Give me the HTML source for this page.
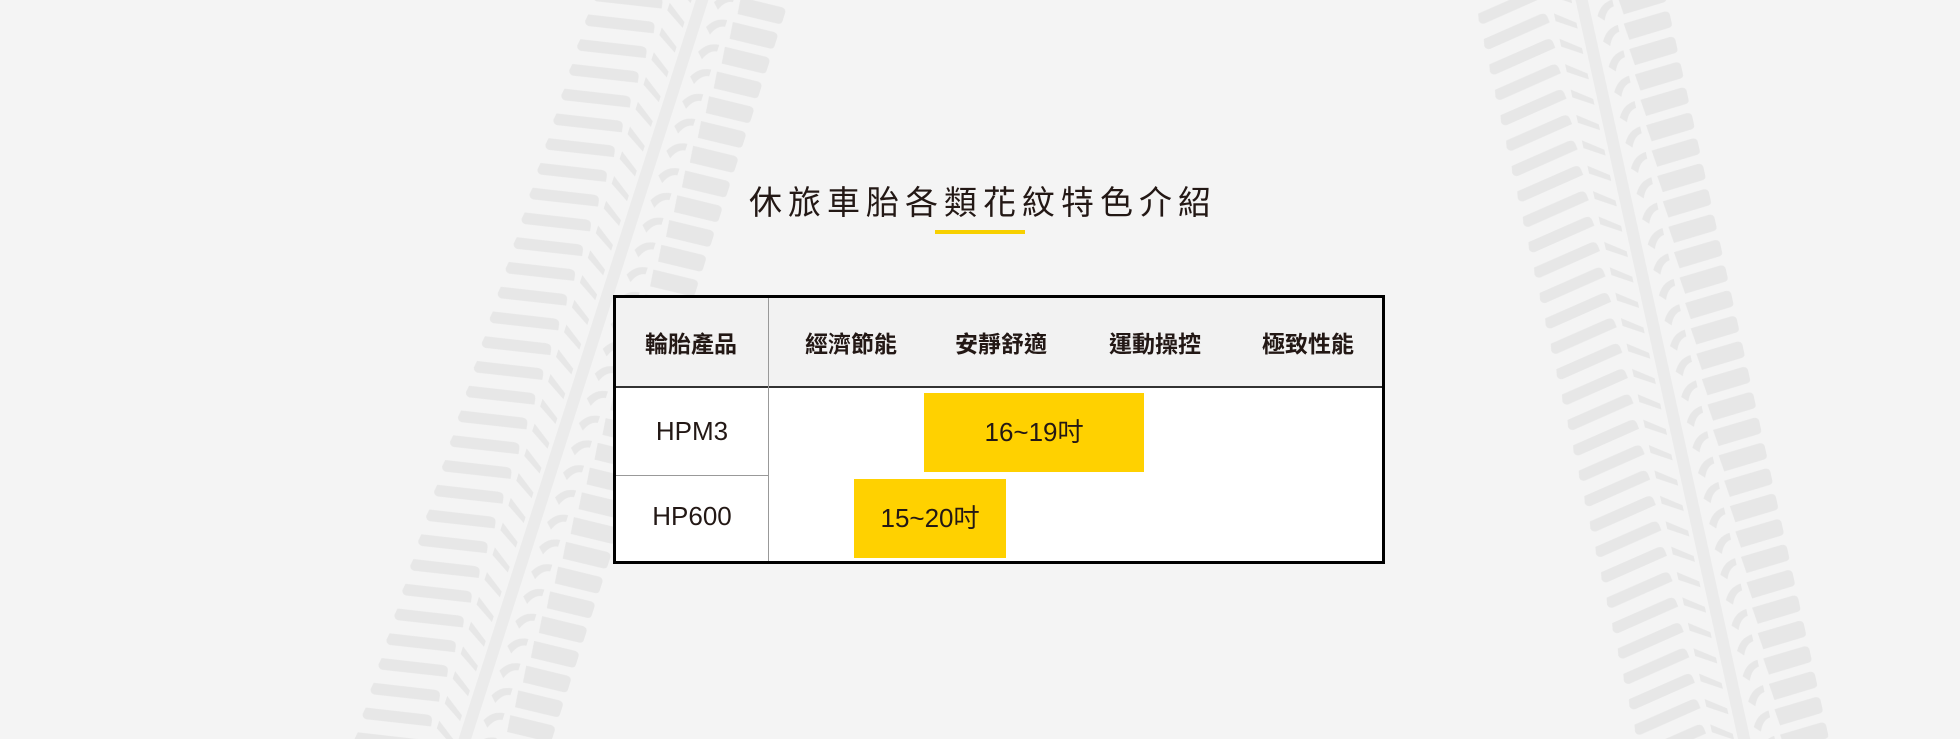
<!DOCTYPE html>
<html><head><meta charset="utf-8"><style>
html,body{margin:0;padding:0;overflow:hidden}
body{width:1960px;height:739px;background:#f4f4f4;position:relative;overflow:hidden;font-family:"Liberation Sans","Noto Sans CJK TC",sans-serif;color:#231815}
svg.bg{position:absolute;left:0;top:0}
.title{position:absolute;left:0;width:1960px;top:178px;text-align:center;font-size:33px;letter-spacing:6px;font-family:"Noto Sans CJK TC",sans-serif;font-weight:400;line-height:44px;padding-left:6px;box-sizing:border-box}
.line{position:absolute;left:935px;top:230px;width:90px;height:4px;background:#f7d000}
.tbl{position:absolute;left:613px;top:295px;width:772px;height:269px;border:3px solid #000;box-sizing:border-box;background:#fff;overflow:hidden}
.hd{position:absolute;left:0;top:0;width:766px;height:88px;background:#f2f2f2;border-bottom:2px solid #333}
.h{position:absolute;top:0;height:88px;line-height:88px;font-size:23px;font-weight:700;font-family:"Noto Sans CJK TC",sans-serif;text-align:center;width:150px}
.vl{position:absolute;left:152px;top:0;width:1px;height:263px;background:#999}
.hl{position:absolute;left:0;top:177px;width:152px;height:1px;background:#999}
.r{position:absolute;left:0;width:152px;text-align:center;font-size:26px;font-weight:400}
.y{position:absolute;background:#ffd100;text-align:center;font-size:26px;font-family:"Liberation Sans","Noto Sans CJK TC",sans-serif}
</style></head><body>
<svg class="bg" width="1960" height="739" viewBox="0 0 1960 739">
<defs>
<pattern id="tr" x="-95" y="0" width="190" height="26" patternUnits="userSpaceOnUse">
<path d="M2 14 L62 2 Q68 1 69 6 L70 12 L6 25 Q2 25 1 21Z" fill="#e7e7e7"/>
<path d="M76 4 L96 18 L96 24 L76 12Z" fill="#e7e7e7"/>
<path d="M100 0 L112 0 L112 26 L100 26Z" fill="#ebebeb"/>
<path d="M118 16 Q124 4 136 3 L136 10 Q128 11 124 22Z" fill="#e7e7e7"/>
<path d="M142 3 L184 0 Q189 0 189 5 L189 13 Q189 17 184 17 L144 20Z" fill="#e7e7e7"/>
</pattern>
</defs>
<g transform="translate(697,-20) rotate(17.8)"><rect x="-95" y="-60" width="190" height="900" fill="url(#tr)"/></g>
<g transform="translate(1566,-20) rotate(-12.4)"><rect x="-95" y="-60" width="190" height="900" fill="url(#tr)"/></g>
</svg>
<div class="title">休旅車胎各類花紋特色介紹</div>
<div class="line"></div>
<div class="tbl">
<div class="hd">
<div class="h" style="left:0">輪胎產品</div>
<div class="h" style="left:160px">經濟節能</div>
<div class="h" style="left:310px">安靜舒適</div>
<div class="h" style="left:464px">運動操控</div>
<div class="h" style="left:617px">極致性能</div>
</div>
<div class="vl"></div>
<div class="hl"></div>
<div class="r" style="top:118px">HPM3</div>
<div class="r" style="top:203px">HP600</div>
<div class="y" style="left:308px;top:95px;width:220px;height:79px;line-height:79px">16~19吋</div>
<div class="y" style="left:238px;top:181px;width:152px;height:79px;line-height:79px">15~20吋</div>
</div>
</body></html>
